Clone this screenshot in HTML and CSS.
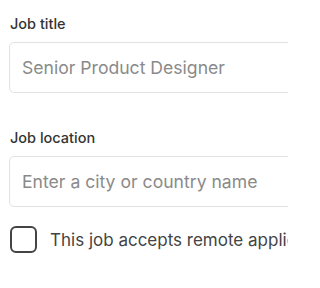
FILE: index.html
```html
<!DOCTYPE html>
<html>
<head>
<meta charset="utf-8">
<link rel="stylesheet" href="styles.css">
</head>
<body>
<div class="page">
<form class="form">
  <div class="field">
    <label class="label" for="title">Job title</label>
    <input class="input" id="title" type="text" placeholder="Senior Product Designer">
  </div>
  <div class="field field-second">
    <label class="label" for="loc">Job location</label>
    <input class="input" id="loc" type="text" placeholder="Enter a city or country name">
  </div>
  <label class="check">
    <span class="box"></span>
    <span class="check-text">This job accepts remote applicants</span>
  </label>
</form>
</div>
</body>
</html>
```
FILE: styles.css
```css
html, body {
  margin: 0;
  padding: 0;
  background: #ffffff;
}
body {
  font-family: Inter, "Noto Sans", sans-serif;
}
.page {
  width: 288px;
  height: 288px;
  overflow: hidden;
}
.form {
  padding: 14px 0 0 9px;
  display: flex;
  flex-direction: column;
}
.field {
  display: flex;
  flex-direction: column;
  gap: 8px;
}
.field-second {
  margin-top: 35px;
}
.label {
  font-size: 14.5px;
  line-height: 20px;
  font-weight: 500;
  color: #333333;
  padding-left: 1px;
}
.input {
  box-sizing: border-box;
  height: 51px;
  width: 330px;
  border: 1px solid #e2e2e2;
  border-radius: 5px;
  padding: 0 12px;
  font-family: Inter, "Noto Sans", sans-serif;
  font-size: 17.6px;
  color: #333;
  outline: none;
  background: #fff;
}
.input::placeholder {
  color: #8a8a8a;
}
.check {
  margin-top: 19px;
  display: flex;
  align-items: center;
  gap: 13px;
  padding-left: 1px;
  white-space: nowrap;
}
.box {
  box-sizing: border-box;
  width: 27px;
  height: 27px;
  border: 2px solid #444444;
  border-radius: 6px;
  flex: none;
}
.check-text {
  font-size: 17px;
  line-height: 24px;
  color: #444444;
}
```
